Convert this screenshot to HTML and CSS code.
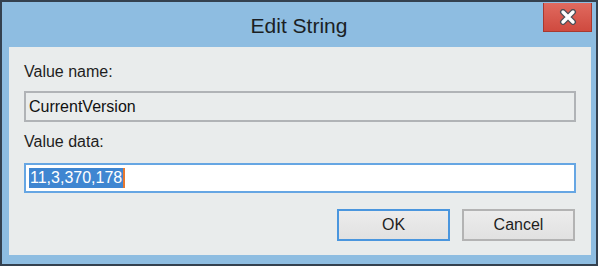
FILE: index.html
```html
<!DOCTYPE html>
<html lang="en">
<head>
    <meta charset="UTF-8">
    <title>Edit String</title>
    <link rel="stylesheet" href="styles.css">
</head>
<body>
    <div class="window">
        <div class="titlebar">
            <span></span>
            <span class="title">Edit String</span>
            <button class="close-button" aria-label="Close">
                <svg width="18" height="16" viewBox="0 0 18 16">
                    <path d="M4 3 L14 13 M14 3 L4 13" stroke="#4a4f57" stroke-width="6" stroke-linecap="round"/>
                    <path d="M4 3 L14 13 M14 3 L4 13" stroke="#ffffff" stroke-width="3.4" stroke-linecap="round"/>
                </svg>
            </button>
        </div>
        <div class="content">
            <label class="field-label">Value name:</label>
            <div class="text-box readonly">CurrentVersion</div>
            <label class="field-label data-label">Value data:</label>
            <div class="text-box focused"><span class="selected">11,3,370,178</span><span class="caret"></span></div>
            <div class="buttons">
                <button class="dialog-button default">OK</button>
                <button class="dialog-button">Cancel</button>
            </div>
        </div>
    </div>
</body>
</html>
```

FILE: styles.css
```css
body {
    margin: 0;
    background: #ffffff;
    font-family: 'Liberation Sans', Arial, sans-serif;
}
.window {
    width: 598px;
    height: 266px;
    box-sizing: border-box;
    border: 2px solid #34414f;
    background: #8ebde1;
    display: flex;
    flex-direction: column;
}
.titlebar {
    height: 45px;
    flex: none;
    display: grid;
    grid-template-columns: 1fr auto 1fr;
}
.title {
    align-self: center;
    font-size: 21px;
    color: #1b1f24;
    padding-top: 2px;
}
.close-button {
    justify-self: end;
    align-self: start;
    margin: 1px 4px 0 0;
    width: 49px;
    height: 29px;
    padding: 0;
    border: 1px solid #a8392f;
    border-top: none;
    background: linear-gradient(#e06a5f, #cf4a3f);
    display: flex;
    justify-content: center;
    align-items: center;
}
.content {
    flex: 1;
    margin: 0 5px 9px 7px;
    background: #e9ecec;
    padding: 0 15px;
    display: flex;
    flex-direction: column;
}
.field-label {
    display: block;
    margin-top: 16px;
    font-size: 16px;
    line-height: 18px;
    color: #1e1e1e;
}
.data-label {
    margin-top: 11px;
}
.text-box {
    box-sizing: border-box;
    font-size: 16px;
    color: #111;
    display: flex;
    align-items: center;
    padding-left: 3px;
}
.readonly {
    margin-top: 10px;
    height: 31px;
    border: 2px solid #b0b3b6;
    background: #e9ecec;
}
.focused {
    margin-top: 12px;
    height: 30px;
    border: 2px solid #66a6e3;
    background: #ffffff;
}
.selected {
    background: #3f86d1;
    color: #ffffff;
    line-height: 20px;
    padding: 0 1px;
}
.caret {
    width: 2px;
    height: 20px;
    background: #e8782e;
}
.buttons {
    margin-top: 16px;
    display: flex;
    justify-content: flex-end;
    gap: 12px;
    padding-right: 1px;
}
.dialog-button {
    width: 113px;
    height: 32px;
    box-sizing: border-box;
    font-family: 'Liberation Sans', Arial, sans-serif;
    font-size: 16px;
    color: #1e1e1e;
    border: 2px solid #b3b3b3;
    background: linear-gradient(#ececec, #e1e1e1);
    padding: 0;
}
.default {
    border-color: #4a96de;
}
```
